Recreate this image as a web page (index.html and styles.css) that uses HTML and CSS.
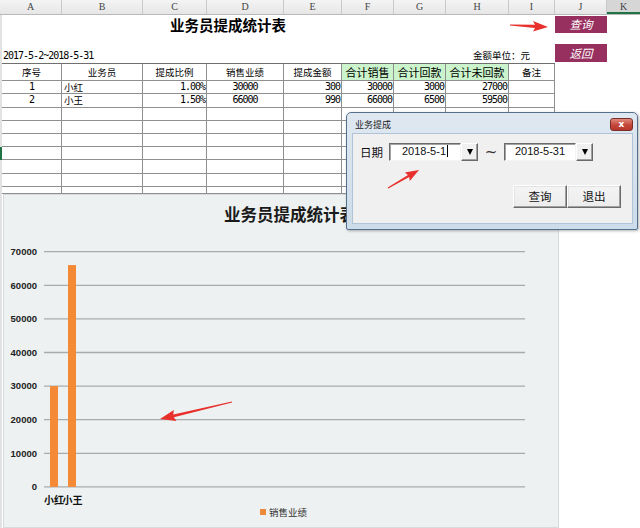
FILE: index.html
```html
<!DOCTYPE html>
<html lang="zh">
<head>
<meta charset="utf-8">
<title>业务员提成统计表</title>
<link rel="stylesheet" href="styles.css">
</head>
<body>
<div class="page">
  <div class="colhdr">
    <div>A</div><div>B</div><div>C</div><div>D</div><div>E</div><div>F</div><div>G</div><div>H</div><div>I</div><div>J</div><div class="sel">K</div>
  </div>
  <div class="sheet">
    <div class="toprows">
      <div class="title">业务员提成统计表</div>
      <div class="btn-cell r1"><span class="macro">查询</span></div>
      <div class="date">2017-5-2~2018-5-31</div>
      <div class="unit">金额单位：元</div>
      <div class="btn-cell r2"><span class="macro">返回</span></div>
    </div>
    <div class="table">
      <div class="h">序号</div><div class="h">业务员</div><div class="h">提成比例</div><div class="h">销售业绩</div><div class="h">提成金额</div><div class="h g">合计销售</div><div class="h g">合计回款</div><div class="h g">合计未回款</div><div class="h">备注</div>
      <div class="c n">1</div><div class="l">小红</div><div class="r n">1.00%</div><div class="c n">30000</div><div class="r n">300</div><div class="r n">30000</div><div class="r n">3000</div><div class="r n">27000</div><div></div>
      <div class="c n">2</div><div class="l">小王</div><div class="r n">1.50%</div><div class="c n">66000</div><div class="r n">990</div><div class="r n">66000</div><div class="r n">6500</div><div class="r n">59500</div><div></div>
      <div></div><div></div><div></div><div></div><div></div><div></div><div></div><div></div><div></div>
      <div></div><div></div><div></div><div></div><div></div><div></div><div></div><div></div><div></div>
      <div></div><div></div><div></div><div></div><div></div><div></div><div></div><div></div><div></div>
      <div class="selrow"></div><div></div><div></div><div></div><div></div><div></div><div></div><div></div><div></div>
      <div></div><div></div><div></div><div></div><div></div><div></div><div></div><div></div><div></div>
      <div></div><div></div><div></div><div></div><div></div><div></div><div></div><div></div><div></div>
      <div></div><div></div><div></div><div></div><div></div><div></div><div></div><div></div><div></div>
    </div>
    <div class="chart">
      <svg width="556" height="334" viewBox="0 0 556 334">
        <rect x="0.5" y="0.5" width="555" height="333" fill="#edf1f1" stroke="#d6dcdc"/>
        <text class="ctitle" x="287" y="27" text-anchor="middle">业务员提成统计表</text>
        <g class="grid">
          <line x1="41" y1="57.7" x2="522" y2="57.7"/>
          <line x1="41" y1="91.3" x2="522" y2="91.3"/>
          <line x1="41" y1="124.9" x2="522" y2="124.9"/>
          <line x1="41" y1="158.5" x2="522" y2="158.5"/>
          <line x1="41" y1="192.1" x2="522" y2="192.1"/>
          <line x1="41" y1="225.7" x2="522" y2="225.7"/>
          <line x1="41" y1="259.3" x2="522" y2="259.3"/>
          <line x1="41" y1="292.9" x2="522" y2="292.9"/>
        </g>
        <g class="ylab" text-anchor="end">
          <text x="34" y="61">70000</text>
          <text x="34" y="94.6">60000</text>
          <text x="34" y="128.2">50000</text>
          <text x="34" y="161.8">40000</text>
          <text x="34" y="195.4">30000</text>
          <text x="34" y="229">20000</text>
          <text x="34" y="262.6">10000</text>
          <text x="34" y="296.2">0</text>
        </g>
        <rect x="47" y="192.1" width="8" height="100.8" fill="#f58a36"/>
        <rect x="65" y="71.1" width="8" height="221.8" fill="#f58a36"/>
        <g class="xlab" text-anchor="middle">
          <text x="51" y="310">小红</text>
          <text x="69.5" y="310">小王</text>
        </g>
        <rect x="257" y="315" width="6" height="6" fill="#ef8a3a"/>
        <text class="legend" x="266" y="322">销售业绩</text>
      </svg>
    </div>
  </div>

  <div class="dialog">
    <div class="dlg-title">
      <span>业务提成</span>
      <span class="close">x</span>
    </div>
    <div class="client">
      <div class="daterow">
        <span class="lbl">日期</span>
        <span class="combo"><span class="input">2018-5-1<span class="caret"></span></span><span class="drop"><i></i></span></span>
        <span class="tilde">~</span>
        <span class="combo"><span class="input">2018-5-31</span><span class="drop"><i></i></span></span>
      </div>
      <div class="btnrow">
        <span class="wbtn">查询</span><span class="wbtn">退出</span>
      </div>
    </div>
  </div>

  <svg class="arrows" width="640" height="528" viewBox="0 0 640 528">
    <polygon points="510,24.4 535,24.8 533,21 548,27 533,31.6 535,27.9 510,25.6"/>
    <polygon points="387.7,187.6 408.0,175.0 404.8,172.5 419,170 409.8,181.1 409.2,177.1 388.3,188.4"/>
    <polygon points="232.1,402.5 173.9,417.2 176.4,421 160,419 173.8,410 173.3,414.5 231.9,401.5"/>
  </svg>
</div>
</body>
</html>
```

FILE: styles.css
```css
* { box-sizing: border-box; }

html, body {
  margin: 0;
  padding: 0;
  background: #ffffff;
}

.page {
  position: relative;
  width: 640px;
  height: 528px;
  overflow: hidden;
  font-family: "Noto Sans CJK SC", "Liberation Sans", sans-serif;
  color: #000;
}

/* column header */
.colhdr {
  display: grid;
  grid-template-columns: 62px 81px 64px 77px 58px 52px 52px 63px 46px 52px 33px;
  height: 15px;
  background: linear-gradient(#f4f4f4, #e6e6e6);
  border-bottom: 1px solid #b8b8b8;
}
.colhdr > div {
  border-right: 1px solid #c9c9c9;
  font-family: "Liberation Serif", serif;
  font-size: 10px;
  line-height: 14px;
  text-align: center;
  color: #444;
}
.colhdr > .sel {
  background: #d6d6d6;
  box-shadow: inset 0 -2px 0 #217346;
  border-right: none;
}

/* sheet body */
.sheet {
  border-left: 2px solid #e2e2e2;
}

.toprows {
  display: grid;
  grid-template-columns: 60px 81px 64px 77px 58px 52px 52px 63px 46px 52px 33px;
  grid-template-rows: 25px 23px;
}
.title {
  grid-column: 2 / 7;
  grid-row: 1;
  text-align: center;
  font-weight: bold;
  font-size: 14.5px;
  line-height: 20px;
  padding-top: 0;
}
.btn-cell {
  grid-column: 10;
  display: flex;
}
.btn-cell.r1 { grid-row: 1; padding-top: 1px; }
.btn-cell.r2 { grid-row: 2; padding-top: 4px; }
.macro {
  width: 52px;
  height: 17px;
  background: #98305f;
  color: #fff;
  font-style: italic;
  font-size: 11.5px;
  line-height: 17px;
  text-align: center;
}
.btn-cell.r2 .macro { height: 18px; line-height: 18px; }
.date {
  grid-column: 1 / 4;
  grid-row: 2;
  align-self: end;
  padding: 0 0 1px 1px;
  font-family: "DejaVu Sans Mono", "Noto Sans CJK SC", monospace;
  font-size: 10px;
  letter-spacing: -1px;
  line-height: 12px;
}
.unit {
  grid-column: 8 / 10;
  grid-row: 2;
  align-self: end;
  padding: 0 0 2px 27px;
  font-size: 9.5px;
  line-height: 12px;
  white-space: nowrap;
}

/* data table */
.table {
  display: grid;
  width: 553px;
  grid-template-columns: 60px 81px 64px 77px 58px 52px 52px 63px 46px;
  grid-template-rows: 17px 13px 14px 13px 13px 13px 13px 14px 13px 7px;
  border-top: 1px solid #6f6f6f;
}
.table > div {
  border-right: 1px solid #8f8f8f;
  border-bottom: 1px solid #8f8f8f;
  font-size: 10px;
  line-height: 12px;
  white-space: nowrap;
}
.table > .h {
  text-align: center;
  font-size: 9.5px;
  line-height: 16px;
}
.table > .h.g {
  background: #ccf4cc;
  font-size: 11px;
}
.table > .c { text-align: center; }
.table > .l {
  text-align: left;
  padding-left: 2px;
  font-size: 9.5px;
  line-height: 12px;
}
.table > .r { text-align: right; padding-right: 1px; }
.table > .n {
  font-family: "DejaVu Sans Mono", monospace;
  letter-spacing: -1px;
  font-size: 10px;
}
.table > .selrow { box-shadow: -2px 0 0 #217346; }

/* chart */
.chart {
  width: 556px;
  height: 334px;
  margin-left: 1px;
}
.chart svg { display: block; }
.ctitle {
  font-family: "Noto Sans CJK SC", sans-serif;
  font-weight: bold;
  font-size: 16.5px;
  fill: #1a1a1a;
}
.grid line {
  stroke: #a7abab;
  stroke-width: 1.3;
}
.ylab text {
  font-family: "Liberation Sans", sans-serif;
  font-weight: bold;
  font-size: 9.5px;
  fill: #222;
}
.xlab text {
  font-family: "Noto Sans CJK SC", sans-serif;
  font-weight: bold;
  font-size: 10px;
  fill: #111;
}
.legend {
  font-family: "Noto Sans CJK SC", sans-serif;
  font-size: 9.5px;
  fill: #333;
}

/* dialog */
.dialog {
  position: absolute;
  left: 346px;
  top: 112px;
  width: 292px;
  height: 118px;
  border: 1px solid #55708c;
  border-radius: 5px 5px 2px 2px;
  background: linear-gradient(#dfe8f1, #cddcea);
  box-shadow: 1px 1px 3px rgba(0, 0, 0, 0.3);
  padding: 0 4px 5px 5px;
  display: flex;
  flex-direction: column;
  z-index: 2;
}
.dlg-title {
  height: 20px;
  display: flex;
  align-items: center;
  justify-content: space-between;
  padding: 2px 0 0 3px;
  font-size: 9px;
  color: #1b1b1b;
}
.close {
  width: 23px;
  height: 13px;
  border: 1px solid #7b2f2a;
  border-radius: 3px;
  background: linear-gradient(#e3897d, #c4473b 55%, #b8362b);
  color: #fff;
  font-family: "DejaVu Sans", sans-serif;
  font-weight: bold;
  font-size: 9px;
  line-height: 10px;
  text-align: center;
}
.client {
  flex: 1;
  background: #f0f0f0;
  border: 1px solid #b1c3d6;
  padding: 9px 11px 0 7px;
  display: flex;
  flex-direction: column;
}
.daterow {
  display: flex;
  align-items: center;
  height: 18px;
}
.lbl {
  width: 29px;
  font-size: 11.5px;
  line-height: 18px;
  color: #111;
}
.combo {
  display: flex;
  height: 18px;
}
.input {
  width: 72px;
  height: 18px;
  background: #fff;
  border: 1px solid;
  border-color: #6a6a6a #f4f4f4 #f4f4f4 #6a6a6a;
  box-shadow: inset 1px 1px 0 #a3a3a3;
  font-family: "Liberation Sans", sans-serif;
  font-size: 11px;
  line-height: 15px;
  text-align: center;
  color: #111;
}
.caret {
  display: inline-block;
  width: 1px;
  height: 12px;
  background: #000;
  vertical-align: -2px;
  margin-left: 1px;
}
.drop {
  width: 17px;
  height: 18px;
  background: #f0f0f0;
  border: 1px solid;
  border-color: #ffffff #696969 #696969 #ffffff;
  box-shadow: inset -1px -1px 0 #a0a0a0;
  display: flex;
  align-items: center;
  justify-content: center;
}
.drop i {
  width: 0;
  height: 0;
  border-left: 3.5px solid transparent;
  border-right: 3.5px solid transparent;
  border-top: 6px solid #000;
}
.tilde {
  width: 26px;
  text-align: center;
  font-family: "DejaVu Sans", sans-serif;
  font-size: 15px;
  color: #333;
  line-height: 16px;
}
.btnrow {
  display: flex;
  justify-content: flex-end;
  margin-top: 24px;
}
.wbtn {
  width: 54px;
  height: 23px;
  background: linear-gradient(#f4f4f4, #ececec);
  border: 1px solid;
  border-color: #ffffff #6b6b6b #6b6b6b #ffffff;
  box-shadow: inset -1px -1px 0 #a0a0a0, inset 1px 1px 0 #e3e3e3;
  font-size: 11.5px;
  line-height: 20px;
  text-align: center;
  color: #111;
}

/* annotation arrows */
.arrows {
  position: absolute;
  left: 0;
  top: 0;
  z-index: 3;
  pointer-events: none;
}
.arrows polygon {
  fill: #e8302c;
}
```
